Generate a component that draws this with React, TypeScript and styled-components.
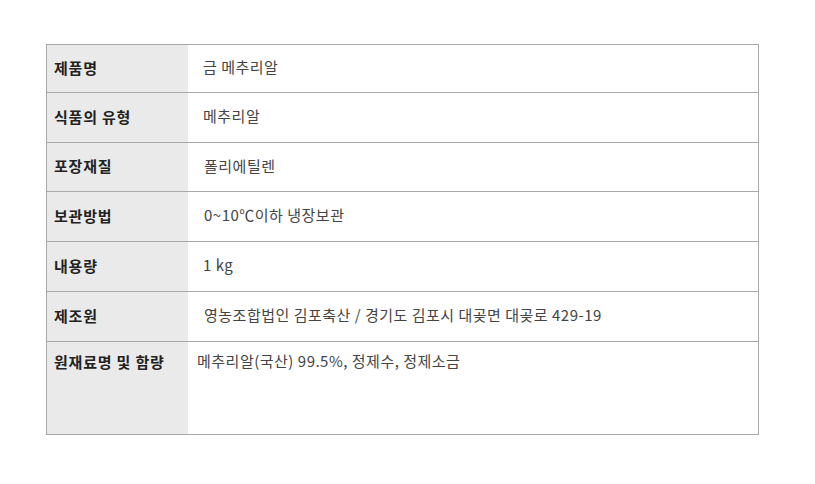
import React from 'react';
import styled, { createGlobalStyle } from 'styled-components';

const GlobalStyle = createGlobalStyle`
  body {
    margin: 0;
    background: #ffffff;
    font-family: "Noto Sans CJK KR", "Noto Sans", sans-serif;
  }
`;

const Page = styled.div`
  padding: 44px 0 0 46px;
`;

const InfoTable = styled.div`
  width: 713px;
  box-sizing: border-box;
  border: 1px solid #a8a8a8;
`;

const Row = styled.div<{ $h: number; $top?: boolean }>`
  display: grid;
  grid-template-columns: 141px 1fr;
  height: ${(p) => p.$h}px;
  align-items: ${(p) => (p.$top ? 'start' : 'center')};
  & + & {
    border-top: 1px solid #a8a8a8;
  }
`;

const Label = styled.div`
  height: 100%;
  box-sizing: border-box;
  display: flex;
  align-items: center;
  padding: 0 0 3px 7px;
  background: #ebeaea;
  font-size: 15px;
  font-weight: 700;
  color: #222222;
  letter-spacing: 0.8px;
`;

const LabelTop = styled(Label)`
  align-items: flex-start;
  padding-top: 9px;
`;

const Value = styled.div<{ $pad: number; $top?: boolean }>`
  padding-left: ${(p) => p.$pad}px;
  padding-top: ${(p) => (p.$top ? '9px' : '0')};
  padding-bottom: ${(p) => (p.$top ? '0' : '3px')};
  font-size: 15px;
  line-height: 20px;
  color: #444444;
  letter-spacing: 0.5px;
  white-space: pre;
`;

const rows = [
  { label: '제품명', value: '금 메추리알', h: 47, pad: 15 },
  { label: '식품의 유형', value: '메추리알', h: 49, pad: 15 },
  { label: '포장재질', value: '폴리에틸렌', h: 48, pad: 16 },
  { label: '보관방법', value: '0~10℃이하 냉장보관', h: 49, pad: 16 },
  { label: '내용량', value: '1 kg', h: 49, pad: 15 },
  { label: '제조원', value: '영농조합법인 김포축산 / 경기도 김포시 대곶면 대곶로 429-19', h: 49, pad: 16 },
  { label: '원재료명 및 함량', value: '메추리알(국산) 99.5%, 정제수, 정제소금', h: 92, pad: 9, top: true },
];

const App = () => {
  return (
    <Page>
      <GlobalStyle />
      <InfoTable>
        {rows.map((r) => (
          <Row key={r.label} $h={r.h} $top={r.top}>
            {r.top ? <LabelTop>{r.label}</LabelTop> : <Label>{r.label}</Label>}
            <Value $pad={r.pad} $top={r.top}>
              {r.value}
            </Value>
          </Row>
        ))}
      </InfoTable>
    </Page>
  );
};

export default App;
